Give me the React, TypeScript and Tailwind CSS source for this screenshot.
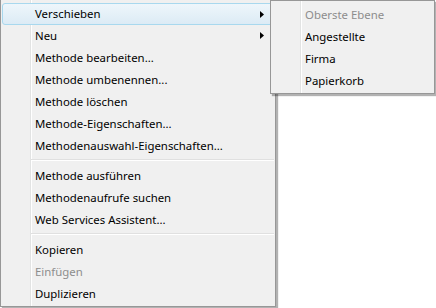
import React from "react";

type Item = { label: string; disabled?: boolean; sub?: boolean; hot?: boolean } | "sep";

const mainItems: Item[] = [
  { label: "Verschieben", sub: true, hot: true },
  { label: "Neu", sub: true },
  { label: "Methode bearbeiten..." },
  { label: "Methode umbenennen..." },
  { label: "Methode löschen" },
  { label: "Methode-Eigenschaften..." },
  { label: "Methodenauswahl-Eigenschaften..." },
  "sep",
  { label: "Methode ausführen" },
  { label: "Methodenaufrufe suchen" },
  { label: "Web Services Assistent..." },
  "sep",
  { label: "Kopieren" },
  { label: "Einfügen", disabled: true },
  { label: "Duplizieren" },
];

const subItems: Item[] = [
  { label: "Oberste Ebene", disabled: true },
  { label: "Angestellte" },
  { label: "Firma" },
  { label: "Papierkorb" },
];

function Arrow() {
  return (
    <svg width="4" height="7" viewBox="0 0 4 7" className="shrink-0">
      <path d="M0 0 L4 3.5 L0 7 Z" fill="#000" />
    </svg>
  );
}

function Row({ item }: { item: Exclude<Item, "sep"> }) {
  return (
    <div
      className={
        "flex h-[22px] items-center justify-between " +
        (item.hot
          ? "mx-[1px] mt-[1px] -mb-[1px] rounded-[3px] border border-[#a8d8ee] bg-gradient-to-b from-[#eef6fb] to-[#dcebf5] pl-[32px] pr-[9px]"
          : "pl-[34px] pr-[11px] pt-[1px]")
      }
    >
      <span
        className={
          "whitespace-nowrap leading-[20px] " + (item.disabled ? "text-[#8d8d8d]" : "text-[#000]")
        }
      >
        {item.label}
      </span>
      {item.sub && <Arrow />}
    </div>
  );
}

function Menu({ items, className }: { items: Item[]; className: string }) {
  return (
    <div
      className={
        "absolute flex flex-col border border-[#979797] bg-[linear-gradient(to_right,#f0f0f0_29px,#e2e3e3_29px,#e2e3e3_30px,#ffffff_30px,#ffffff_31px,#f0f0f0_31px)] py-[2px] shadow-[2px_2px_1px_rgba(0,0,0,0.3)] " +
        className
      }
    >
      {items.map((it, i) =>
        it === "sep" ? (
          <div key={i} className="flex h-[8px] flex-col justify-center pl-[30px] pr-[1px]">
            <div className="h-[1px] bg-[#e0e0e0]" />
            <div className="h-[1px] bg-white" />
          </div>
        ) : (
          <Row key={i} item={it} />
        )
      )}
    </div>
  );
}

export default function App() {
  return (
    <div
      className="relative h-[308px] w-[436px] overflow-hidden bg-white text-[11.4px]"
      style={{ fontFamily: '"Noto Sans", "Open Sans", sans-serif' }}
    >
      <Menu items={mainItems} className="left-0 top-[-1px] h-[308px] w-[276px]" />
      <Menu items={subItems} className="left-[270px] top-0 h-[94px] w-[165px]" />
    </div>
  );
}
